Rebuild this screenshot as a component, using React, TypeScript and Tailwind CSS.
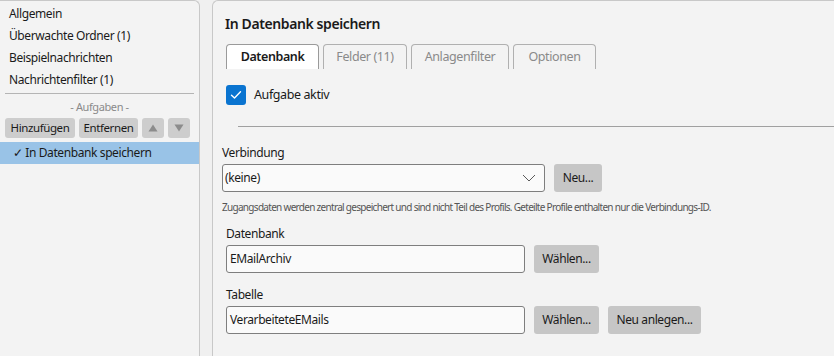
const font = { fontFamily: '"Segoe UI", "Noto Sans", "Liberation Sans", sans-serif' };

const navItems = ["Allgemein", "Überwachte Ordner (1)", "Beispielnachrichten", "Nachrichtenfilter (1)"];
const tabs = ["Datenbank", "Felder (11)", "Anlagenfilter", "Optionen"];

const GrayButton = ({ label, className }: { label: string; className?: string }) => (
  <button className={"h-[28px] rounded-[3px] bg-[#c6c6c6] text-[12px] text-[#1a1a1a] " + (className ?? "")}>
    {label}
  </button>
);

const Arrow = ({ up }: { up?: boolean }) => (
  <button className="w-[22px] rounded-[3px] bg-[#cdcdcd] flex items-center justify-center">
    <svg width="10" height="8" viewBox="0 0 10 8">
      <path d={up ? "M5 0.5 L9.5 7.5 L0.5 7.5 Z" : "M0.5 0.5 L9.5 0.5 L5 7.5 Z"} fill="#8c8c8c" />
    </svg>
  </button>
);

const App = () => {
  return (
    <div
      style={font}
      className="w-[834px] h-[356px] overflow-hidden bg-[#f0f0f0] flex gap-[12px] text-[#1a1a1a] tracking-[-0.4px]"
    >
      {/* left list */}
      <aside className="w-[200px] shrink-0 h-full bg-[#f3f3f3] border-t border-r border-[#c8c8c8] rounded-tr-[6px] pt-[2px]">
        {navItems.map((item) => (
          <div key={item} className="h-[22px] pl-[9px] text-[12px] leading-[22px]">
            {item}
          </div>
        ))}
        <div className="mx-[5px] mt-[2px] border-t border-[#b4b4b4]" />
        <div className="h-[24px] text-center text-[11px] leading-[26px] text-[#8a8a8a]">- Aufgaben -</div>
        <div className="flex gap-[4px] px-[5px] h-[20px]">
          <button className="w-[70px] rounded-[3px] bg-[#cdcdcd] text-[11.5px]">Hinzufügen</button>
          <button className="w-[59px] rounded-[3px] bg-[#cdcdcd] text-[11.5px]">Entfernen</button>
          <Arrow up />
          <Arrow />
        </div>
        <div className="mt-[4px] h-[22px] bg-[#99c3e7] pl-[13px] text-[12px] leading-[22px]">✓ In Datenbank speichern</div>
      </aside>

      {/* right detail */}
      <main className="w-[660px] shrink-0 h-full bg-[#f3f3f3] border-t border-l border-[#c8c8c8] rounded-tl-[6px]">
        <h1 className="pl-[12px] pt-[14px] text-[14px] leading-[18px] font-semibold">In Datenbank speichern</h1>
        <div className="flex gap-[4px] pl-[13px] mt-[11px]">
          {tabs.map((t, i) => (
            <div
              key={t}
              className={
                i === 0
                  ? "h-[25px] w-[93px] rounded-t-[4px] border border-b-0 border-[#9a9a9a] bg-white text-center text-[12.5px] leading-[24px] font-semibold"
                  : "h-[25px] rounded-t-[4px] border border-b-0 border-[#b0b0b0] bg-[#f3f3f3] text-center text-[12.5px] leading-[24px] text-[#8a8a8a] " +
                    (i === 1 ? "w-[84px]" : i === 2 ? "w-[98px]" : "w-[83px]")
              }
            >
              {t}
            </div>
          ))}
        </div>

        <div className="flex items-center gap-[8px] pl-[13px] mt-[16px]">
          <span className="w-[20px] h-[20px] rounded-[3px] bg-[#0a74d0] flex items-center justify-center">
            <svg width="12" height="10" viewBox="0 0 12 10" fill="none">
              <path d="M1.5 5.2 L4.5 8 L10.5 1.8" stroke="white" strokeWidth="1.4" strokeLinecap="round" strokeLinejoin="round" />
            </svg>
          </span>
          <span className="text-[12.5px]">Aufgabe aktiv</span>
        </div>

        <div className="ml-[25px] mt-[21px] border-t border-[#a0a0a0]" />

        <div className="pl-[9px]">
          <div className="mt-[17px] text-[12px] leading-[18px]">Verbindung</div>
          <div className="flex gap-[9px] mt-[2px]">
            <div className="w-[323px] h-[28px] rounded-[3px] border border-[#7e7e7e] bg-[#fafafa] flex items-center justify-between pl-[2px] pr-[8px]">
              <span className="text-[12px]">(keine)</span>
              <svg width="14" height="8" viewBox="0 0 14 8" fill="none">
                <path d="M1 1 L7 7 L13 1" stroke="#5a5a5a" strokeWidth="1" />
              </svg>
            </div>
            <GrayButton label="Neu..." className="w-[48px]" />
          </div>
          <div className="mt-[7px] text-[10px] leading-[16px] tracking-[-0.7px] text-[#555] whitespace-nowrap">
            Zugangsdaten werden zentral gespeichert und sind nicht Teil des Profils. Geteilte Profile enthalten nur die Verbindungs-ID.
          </div>
        </div>

        <div className="pl-[13px]">
          <div className="mt-[10px] text-[12px] leading-[18px]">Datenbank</div>
          <div className="flex gap-[9px] mt-[2px]">
            <div className="w-[299px] h-[28px] rounded-[3px] border border-[#7e7e7e] bg-[#fafafa] flex items-center pl-[3px] text-[12px]">
              EMailArchiv
            </div>
            <GrayButton label="Wählen..." className="w-[65px]" />
          </div>

          <div className="mt-[13px] text-[12px] leading-[18px]">Tabelle</div>
          <div className="flex gap-[9px] mt-[2px]">
            <div className="w-[299px] h-[28px] rounded-[3px] border border-[#7e7e7e] bg-[#fafafa] flex items-center pl-[3px] text-[12px]">
              VerarbeiteteEMails
            </div>
            <GrayButton label="Wählen..." className="w-[65px]" />
            <GrayButton label="Neu anlegen..." className="w-[93px]" />
          </div>
        </div>
      </main>
    </div>
  );
};

export default App;
